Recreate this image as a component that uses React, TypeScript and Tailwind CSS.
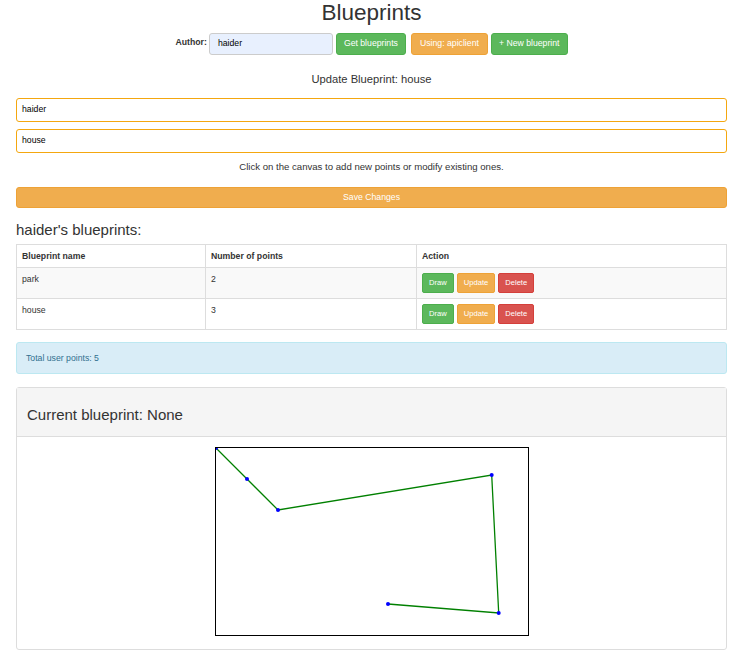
import React from 'react'

const points: [number, number][] = [
  [0, 0],
  [31, 31],
  [62, 62],
  [275.7, 27],
  [282.7, 165],
  [172, 156],
]

const rows = [
  { name: 'park', count: 2 },
  { name: 'house', count: 3 },
]

function SmallBtn({ label, tone }: { label: string; tone: 'green' | 'orange' | 'red' }) {
  const cls =
    tone === 'green'
      ? 'bg-[#5cb85c] border-[#4cae4c]'
      : tone === 'orange'
        ? 'bg-[#f0ad4e] border-[#eea236]'
        : 'bg-[#d9534f] border-[#d43f3a]'
  return (
    <span className={`${cls} inline-flex items-center h-[20px] px-[6px] border rounded-[2px] text-white text-[7.6px] leading-none`}>
      {label}
    </span>
  )
}

export default function App() {
  return (
    <div className="w-[711px] ml-[16px] text-[#333] font-['Liberation_Sans',Arial,sans-serif] text-[8.7px]">
      {/* Title */}
      <h1 className="text-center text-[22.5px] leading-[25px]">Blueprints</h1>

      {/* Author row */}
      <div className="mt-[8px] flex items-center justify-center h-[22px]">
        <span className="font-bold text-[8.7px] mb-[3px] mr-[2px]">Author:</span>
        <div className="w-[124px] h-[22px] bg-[#e8f0fe] border border-[#ccc] rounded-[3px] flex items-center pl-[8px] text-[8.7px] text-black">
          haider
        </div>
        <span className="ml-[3px] h-[22px] px-[7px] flex items-center bg-[#5cb85c] border border-[#4cae4c] rounded-[3px] text-white">
          Get blueprints
        </span>
        <span className="ml-[5px] h-[22px] px-[8px] flex items-center bg-[#f0ad4e] border border-[#eea236] rounded-[3px] text-white">
          Using: apiclient
        </span>
        <span className="ml-[3px] h-[22px] px-[7px] flex items-center bg-[#5cb85c] border border-[#4cae4c] rounded-[3px] text-white">
          + New blueprint
        </span>
      </div>

      {/* Update form */}
      <h4 className="mt-[18px] text-center text-[11.2px] leading-[12px]">Update Blueprint: house</h4>
      <div className="mt-[13px] flex flex-col gap-[7px]">
        <div className="h-[24px] border border-[#f4a70f] rounded-[3px] flex items-center px-[5px] text-black">haider</div>
        <div className="h-[24px] border border-[#f4a70f] rounded-[3px] flex items-center px-[5px] text-black">house</div>
      </div>
      <p className="mt-[8px] text-center text-[9.6px] leading-[11px]">
        Click on the canvas to add new points or modify existing ones.
      </p>
      <div className="mt-[15px] h-[21px] bg-[#f0ad4e] border border-[#eea236] rounded-[3px] flex items-center justify-center text-white">
        Save Changes
      </div>

      {/* Blueprints table */}
      <h3 className="mt-[13px] text-[15px] leading-[17px]">haider's blueprints:</h3>
      <table className="mt-[6px] w-full border-collapse border border-[#ddd] text-left">
        <thead>
          <tr>
            <th className="w-[189px] border border-[#ddd] px-[5px] py-[5px] leading-[12px] font-bold">Blueprint name</th>
            <th className="w-[211px] border border-[#ddd] px-[5px] py-[5px] leading-[12px] font-bold">Number of points</th>
            <th className="border border-[#ddd] px-[5px] py-[5px] leading-[12px] font-bold">Action</th>
          </tr>
        </thead>
        <tbody>
          {rows.map((r, i) => (
            <tr key={r.name} className={i === 0 ? 'bg-[#f9f9f9]' : ''}>
              <td className="border border-[#ddd] px-[5px] py-[5px] align-top leading-[12px]">{r.name}</td>
              <td className="border border-[#ddd] px-[5px] py-[5px] align-top leading-[12px]">{r.count}</td>
              <td className="border border-[#ddd] px-[5px] py-[5px] align-top">
                <div className="flex gap-[3px]">
                  <SmallBtn label="Draw" tone="green" />
                  <SmallBtn label="Update" tone="orange" />
                  <SmallBtn label="Delete" tone="red" />
                </div>
              </td>
            </tr>
          ))}
        </tbody>
      </table>

      {/* Info alert */}
      <div className="mt-[12px] bg-[#d9edf7] border border-[#bce8f1] rounded-[3px] px-[9px] py-[9px] leading-[12px] text-[#31708f]">
        Total user points: 5
      </div>

      {/* Canvas panel */}
      <div className="mt-[13px] border border-[#ddd] rounded-[3px]">
        <div className="bg-[#f5f5f5] border-b border-[#ddd] px-[10px] pt-[18px] pb-[13px] text-[15px] leading-[17px]">
          Current blueprint: None
        </div>
        <div className="pt-[10px] pb-[13px] flex justify-center">
          <div className="w-[314px] h-[189px] border border-black bg-white">
            <svg width="312" height="187" viewBox="0 0 312 187">
              <polyline
                points={points.map(([x, y]) => `${x},${y}`).join(' ')}
                fill="none"
                stroke="#008000"
                strokeWidth="1.3"
              />
              {points.map(([x, y], i) => (
                <circle key={i} cx={x} cy={y} r="2" fill="#0000ff" />
              ))}
            </svg>
          </div>
        </div>
      </div>
    </div>
  )
}
